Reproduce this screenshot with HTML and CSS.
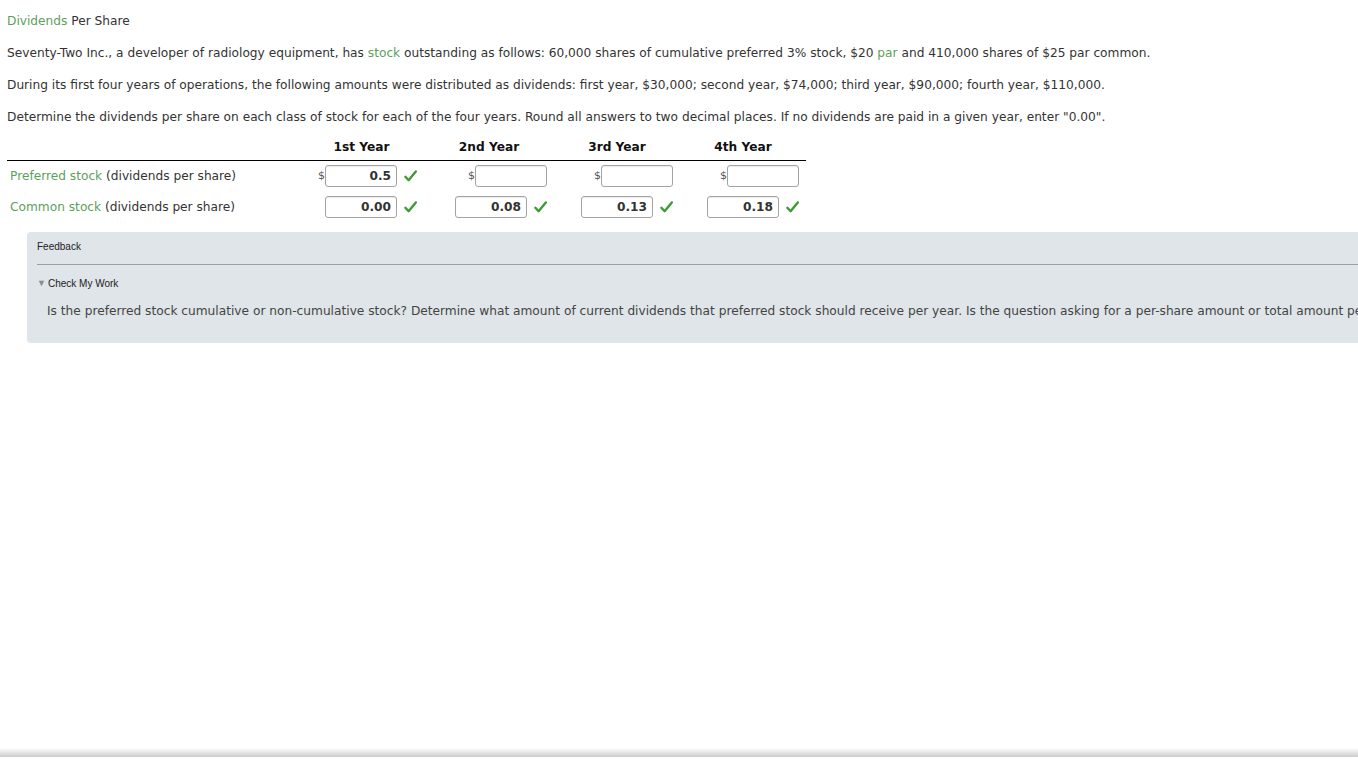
FILE: index.html
```
<!DOCTYPE html>
<html lang="en">
<head>
    <meta charset="UTF-8">
    <meta name="viewport" content="width=device-width, initial-scale=1.0">
    <title>Dividends Per Share</title>
    <link rel="stylesheet" href="styles.css">
</head>
<body>
    <div class="page">
        <p class="title"><span class="term">Dividends</span> Per Share</p>
        <p>Seventy-Two Inc., a developer of radiology equipment, has <span class="term">stock</span> outstanding as follows: 60,000 shares of cumulative preferred 3% stock, $20 <span class="term">par</span> and 410,000 shares of $25 par common.</p>
        <p>During its first four years of operations, the following amounts were distributed as dividends: first year, $30,000; second year, $74,000; third year, $90,000; fourth year, $110,000.</p>
        <p>Determine the dividends per share on each class of stock for each of the four years. Round all answers to two decimal places. If no dividends are paid in a given year, enter "0.00".</p>

        <table class="answers">
            <thead>
                <tr>
                    <th class="label-col"></th>
                    <th class="c1">1st Year</th>
                    <th class="c2">2nd Year</th>
                    <th class="c3">3rd Year</th>
                    <th class="c4">4th Year</th>
                </tr>
            </thead>
            <tbody>
                <tr>
                    <td class="label"><span class="term">Preferred stock</span> (dividends per share)</td>
                    <td><div class="cell"><span class="dollar">$</span><input class="amt" type="text" value="0.5"><svg class="check" viewBox="0 0 13 12"><path d="M1.4 6.8 L4.6 10.2 L11.8 1.4"/></svg></div></td>
                    <td><div class="cell"><span class="dollar">$</span><input class="amt" type="text" value=""></div></td>
                    <td><div class="cell"><span class="dollar">$</span><input class="amt" type="text" value=""></div></td>
                    <td><div class="cell"><span class="dollar">$</span><input class="amt" type="text" value=""></div></td>
                </tr>
                <tr>
                    <td class="label"><span class="term">Common stock</span> (dividends per share)</td>
                    <td><div class="cell"><input class="amt" type="text" value="0.00"><svg class="check" viewBox="0 0 13 12"><path d="M1.4 6.8 L4.6 10.2 L11.8 1.4"/></svg></div></td>
                    <td><div class="cell"><input class="amt" type="text" value="0.08"><svg class="check" viewBox="0 0 13 12"><path d="M1.4 6.8 L4.6 10.2 L11.8 1.4"/></svg></div></td>
                    <td><div class="cell"><input class="amt" type="text" value="0.13"><svg class="check" viewBox="0 0 13 12"><path d="M1.4 6.8 L4.6 10.2 L11.8 1.4"/></svg></div></td>
                    <td><div class="cell"><input class="amt" type="text" value="0.18"><svg class="check" viewBox="0 0 13 12"><path d="M1.4 6.8 L4.6 10.2 L11.8 1.4"/></svg></div></td>
                </tr>
            </tbody>
        </table>

        <div class="feedback">
            <div class="fb-title">Feedback</div>
            <div class="fb-toggle"><span class="arrow">&#9660;</span>Check My Work</div>
            <p class="fb-text">Is the preferred stock cumulative or non-cumulative stock? Determine what amount of current dividends that preferred stock should receive per year. Is the question asking for a per-share amount or total amount per year?</p>
        </div>
    </div>
    <div class="bottom-shade"></div>
</body>
</html>
```

FILE: styles.css
```
html, body {
    margin: 0;
    background: #fff;
    overflow: hidden;
}
body {
    font-family: "DejaVu Sans", Verdana, sans-serif;
    font-size: 12.2px;
    line-height: 16px;
    color: #333;
    height: 774px;
}
.page {
    padding: 13px 0 0 7px;
}
p {
    margin: 0 0 16px;
}
.term {
    color: #5d9f5d;
}
.answers {
    border-collapse: collapse;
    margin-top: -2px;
}
.answers th {
    font-weight: bold;
    text-align: center;
    padding: 0 0 5px;
    border-bottom: 1px solid #000;
    color: #111;
}
.answers .label-col { width: 292px; }
.answers .c1 { width: 125px; }
.answers .c2 { width: 130px; }
.answers .c3 { width: 126px; }
.answers .c4 { width: 126px; }
.answers td {
    padding: 4px 7px 5px 0;
    vertical-align: middle;
}
.answers td.label {
    padding-left: 3px;
    white-space: nowrap;
}
.cell {
    display: flex;
    justify-content: flex-end;
    align-items: center;
    height: 22px;
}
.dollar {
    font-size: 11px;
    color: #555;
    width: 7px;
}
.amt {
    box-sizing: border-box;
    width: 72px;
    height: 22px;
    border: 1px solid #a3a3a3;
    border-radius: 3px;
    padding: 0 5px;
    margin: 0;
    text-align: right;
    font-family: "DejaVu Sans", Verdana, sans-serif;
    font-size: 12.2px;
    font-weight: bold;
    color: #333;
    background: #fff;
    box-shadow: inset 0 1px 1px rgba(0,0,0,0.08);
}
.check {
    width: 13px;
    height: 12px;
    margin-left: 7px;
}
.check path {
    fill: none;
    stroke: #3f9a35;
    stroke-width: 2.4;
    stroke-linecap: round;
    stroke-linejoin: round;
}
.feedback {
    margin: 9px 0 0 20px;
    width: 1500px;
    background: #dfe5e8;
    border-radius: 4px;
    padding: 9px 0 24px 10px;
}
.fb-title {
    font-family: "Liberation Sans", Arial, sans-serif;
    font-size: 10px;
    line-height: 12px;
    color: #222;
    padding-bottom: 11px;
    border-bottom: 1px solid #9a9fa3;
}
.fb-toggle {
    font-family: "Liberation Sans", Arial, sans-serif;
    font-size: 10px;
    line-height: 12px;
    color: #222;
    margin-top: 12px;
}
.arrow {
    font-size: 9px;
    color: #8a8a8a;
    margin-right: 2px;
    vertical-align: 1px;
}
.fb-text {
    margin: 13px 0 0 10px;
    white-space: nowrap;
    color: #444;
}
.bottom-shade {
    position: fixed;
    left: 0;
    right: 0;
    bottom: 17px;
    height: 9px;
    background: linear-gradient(to bottom, rgba(220,220,220,0), #cbcbcb);
}
```
